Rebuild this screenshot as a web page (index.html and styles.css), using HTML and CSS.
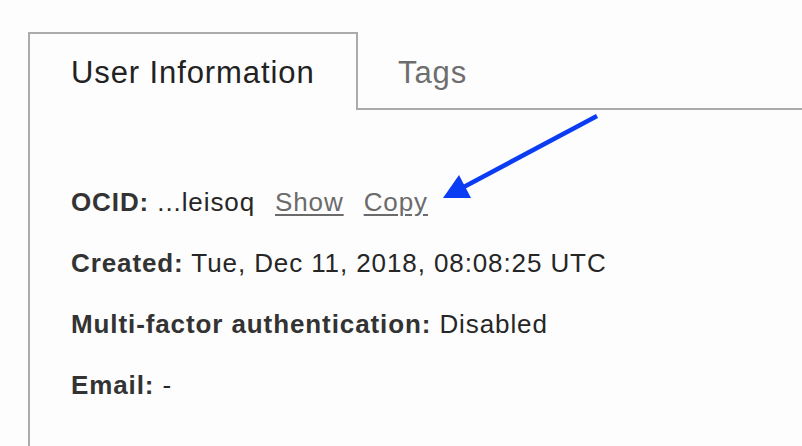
FILE: index.html
```html
<!DOCTYPE html>
<html>
<head>
<meta charset="utf-8">
<link rel="stylesheet" href="styles.css">
</head>
<body>
<div class="page">
  <div class="tabs">
    <div class="tab active">User Information</div>
    <div class="tab rest">Tags</div>
  </div>
  <div class="panel">
    <div class="row"><span class="label">OCID:</span> <span class="value">...leisoq</span><a class="link first">Show</a><a class="link">Copy</a></div>
    <div class="row"><span class="label">Created:</span> <span class="value">Tue, Dec 11, 2018, 08:08:25 UTC</span></div>
    <div class="row"><span class="label">Multi-factor authentication:</span> <span class="value">Disabled</span></div>
    <div class="row"><span class="label">Email:</span> <span class="value">-</span></div>
  </div>
  <svg class="arrow" width="802" height="446" viewBox="0 0 802 446">
    <line x1="597" y1="116" x2="460" y2="189" stroke="#0a3cf4" stroke-width="4.5"/>
    <polygon points="443,198 459,175 471,198" fill="#0a3cf4"/>
  </svg>
</div>
</body>
</html>
```
FILE: styles.css
```css
html, body {
  margin: 0;
  padding: 0;
  background: #fdfdfd;
}
.page {
  position: relative;
  width: 802px;
  height: 446px;
  overflow: hidden;
  padding: 32px 0 0 28px;
  box-sizing: border-box;
  font-family: "Liberation Sans", Arial, sans-serif;
}
.tabs {
  display: flex;
}
.tab {
  font-size: 31px;
  line-height: 30px;
  letter-spacing: 0.9px;
}
.tab.active {
  color: #222;
  border: 2px solid #ababab;
  border-bottom: none;
  padding: 24px 0 22px 41px;
  box-sizing: border-box;
  width: 330px;
}
.tab.rest {
  flex: 1;
  color: #6e6e6e;
  padding: 26px 0 0 40px;
  border-bottom: 2px solid #ababab;
}
.panel {
  border-left: 2px solid #ababab;
  height: 400px;
  padding: 80px 0 0 41px;
  box-sizing: border-box;
  font-size: 26px;
  line-height: 24px;
  letter-spacing: 0.9px;
}
.row {
  margin-bottom: 37px;
  white-space: nowrap;
}
.label {
  font-weight: bold;
  color: #333;
}
.value {
  color: #262626;
}
.link {
  color: #6b6b6b;
  text-decoration: underline;
  text-underline-offset: 3px;
  margin-left: 20px;
}
.link.first {
  margin-left: 20px;
}
.arrow {
  position: absolute;
  left: 0;
  top: 0;
}
```
